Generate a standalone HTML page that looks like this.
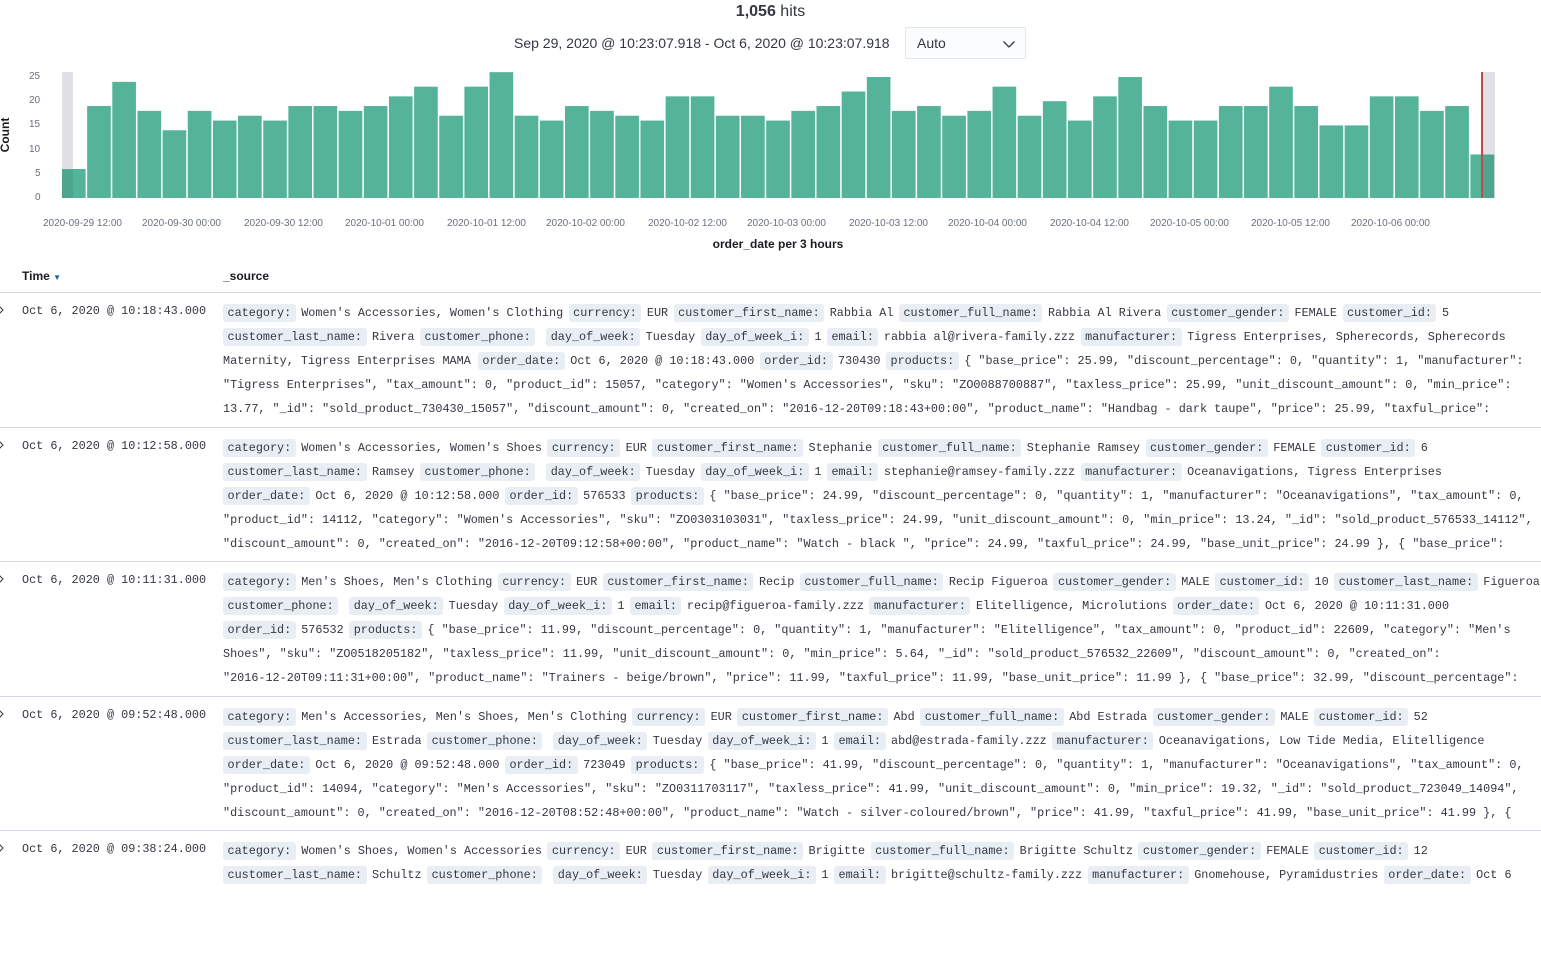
<!DOCTYPE html>
<html><head><meta charset="utf-8">
<style>
*{margin:0;padding:0;box-sizing:border-box}
body{width:1541px;height:876px;overflow:hidden;background:#fff;font-family:"Liberation Sans",sans-serif;color:#343741;position:relative}
.hits{position:absolute;top:2px;left:0;width:1541px;text-align:center;font-size:16px;line-height:20px;color:#343741}
.range{position:absolute;top:34px;left:514px;font-size:14px;line-height:18px;color:#343741}
.sel{position:absolute;left:905px;top:27px;width:121px;height:32px;background:#fbfcfd;border:1px solid #e3e7ee;border-radius:2px;font-size:14px;padding:7px 11px;line-height:16px}
.sel svg{position:absolute;right:9px;top:11px}
.ax{position:absolute;font-size:10px;color:#69707d;line-height:12px}
.xl{position:absolute;top:218px;font-size:10px;color:#69707d;white-space:nowrap}
.hdr{position:absolute;top:268px;font-size:12px;font-weight:bold;line-height:16px;color:#1a1c21}
.sep{position:absolute;left:0;width:1541px;height:1px;background:#d3dae6}
.row{position:absolute;left:0;width:1541px;height:134px;overflow:hidden;font-family:"Liberation Mono",monospace;font-size:11.8px;color:#343741}
.t{position:absolute;left:22px;top:10px;line-height:16px}
.chev{position:absolute;left:-3px;top:11px}
.src{position:absolute;left:223px;top:8px;width:1318px}
.l{height:24px;line-height:24px;white-space:nowrap;overflow:hidden}
.k{background:#e9eef4;border-radius:3px;padding:2px 4.5px;margin-right:5.5px}
.v{margin-right:5.5px}
</style></head><body>
<div class="hits"><b>1,056</b> hits</div>
<div class="range">Sep 29, 2020 @ 10:23:07.918 - Oct 6, 2020 @ 10:23:07.918</div>
<div class="sel">Auto<svg width="14" height="10" viewBox="0 0 14 10"><path d="M1.5 2.5L7 8L12.5 2.5" fill="none" stroke="#343741" stroke-width="1.3"/></svg></div>

<div class="ax" style="left:29px;top:71px">25</div>
<div class="ax" style="left:29px;top:95px">20</div>
<div class="ax" style="left:29px;top:119px">15</div>
<div class="ax" style="left:29px;top:144px">10</div>
<div class="ax" style="left:35px;top:168px">5</div>
<div class="ax" style="left:35px;top:192px">0</div>
<div style="position:absolute;left:-14px;top:129px;width:38px;text-align:center;line-height:12px;transform:rotate(-90deg);font-size:12px;font-weight:bold;color:#1a1c21">Count</div>

<svg style="position:absolute;left:0;top:0" width="1541" height="210">
<rect x="62" y="72" width="11" height="126" fill="#e0e1e6"/>
<rect x="1482" y="72" width="13" height="126" fill="#e0e1e6"/>
<g transform="translate(62,198) scale(25.15,-4.84)" fill="#54b399">
<rect x="0" width="0.94" height="6"/><rect x="1" width="0.94" height="19"/><rect x="2" width="0.94" height="24"/><rect x="3" width="0.94" height="18"/><rect x="4" width="0.94" height="14"/><rect x="5" width="0.94" height="18"/><rect x="6" width="0.94" height="16"/><rect x="7" width="0.94" height="17"/><rect x="8" width="0.94" height="16"/><rect x="9" width="0.94" height="19"/>
<rect x="10" width="0.94" height="19"/><rect x="11" width="0.94" height="18"/><rect x="12" width="0.94" height="19"/><rect x="13" width="0.94" height="21"/><rect x="14" width="0.94" height="23"/><rect x="15" width="0.94" height="17"/><rect x="16" width="0.94" height="23"/><rect x="17" width="0.94" height="26"/><rect x="18" width="0.94" height="17"/><rect x="19" width="0.94" height="16"/>
<rect x="20" width="0.94" height="19"/><rect x="21" width="0.94" height="18"/><rect x="22" width="0.94" height="17"/><rect x="23" width="0.94" height="16"/><rect x="24" width="0.94" height="21"/><rect x="25" width="0.94" height="21"/><rect x="26" width="0.94" height="17"/><rect x="27" width="0.94" height="17"/><rect x="28" width="0.94" height="16"/><rect x="29" width="0.94" height="18"/>
<rect x="30" width="0.94" height="19"/><rect x="31" width="0.94" height="22"/><rect x="32" width="0.94" height="25"/><rect x="33" width="0.94" height="18"/><rect x="34" width="0.94" height="19"/><rect x="35" width="0.94" height="17"/><rect x="36" width="0.94" height="18"/><rect x="37" width="0.94" height="23"/><rect x="38" width="0.94" height="17"/><rect x="39" width="0.94" height="20"/>
<rect x="40" width="0.94" height="16"/><rect x="41" width="0.94" height="21"/><rect x="42" width="0.94" height="25"/><rect x="43" width="0.94" height="19"/><rect x="44" width="0.94" height="16"/><rect x="45" width="0.94" height="16"/><rect x="46" width="0.94" height="19"/><rect x="47" width="0.94" height="19"/><rect x="48" width="0.94" height="23"/><rect x="49" width="0.94" height="19"/>
<rect x="50" width="0.94" height="15"/><rect x="51" width="0.94" height="15"/><rect x="52" width="0.94" height="21"/><rect x="53" width="0.94" height="21"/><rect x="54" width="0.94" height="18"/><rect x="55" width="0.94" height="19"/><rect x="56" width="0.94" height="9"/>
</g>
<rect x="62" y="170" width="11" height="28" fill="#000" opacity="0.08"/>
<rect x="1482" y="155" width="13" height="43" fill="#000" opacity="0.08"/>
<rect x="1481" y="72" width="2" height="126" fill="#bd4c48"/>
</svg>

<div class="xl" style="left:43px">2020-09-29 12:00</div>
<div class="xl" style="left:142px">2020-09-30 00:00</div>
<div class="xl" style="left:244px">2020-09-30 12:00</div>
<div class="xl" style="left:345px">2020-10-01 00:00</div>
<div class="xl" style="left:447px">2020-10-01 12:00</div>
<div class="xl" style="left:546px">2020-10-02 00:00</div>
<div class="xl" style="left:648px">2020-10-02 12:00</div>
<div class="xl" style="left:747px">2020-10-03 00:00</div>
<div class="xl" style="left:849px">2020-10-03 12:00</div>
<div class="xl" style="left:948px">2020-10-04 00:00</div>
<div class="xl" style="left:1050px">2020-10-04 12:00</div>
<div class="xl" style="left:1150px">2020-10-05 00:00</div>
<div class="xl" style="left:1251px">2020-10-05 12:00</div>
<div class="xl" style="left:1351px">2020-10-06 00:00</div>
<div style="position:absolute;top:237px;left:0;width:1556px;text-align:center;font-size:12px;font-weight:bold;color:#1a1c21">order_date per 3 hours</div>

<div class="hdr" style="left:22px">Time <span style="color:#006bb4;font-size:8px">&#9660;</span></div>
<div class="hdr" style="left:223px">_source</div>

<div class="sep" style="top:292px"></div>
<div class="row" style="top:293px">
<svg class="chev" width="8" height="12"><path d="M2 2L6 6L2 10" fill="none" stroke="#343741" stroke-width="1"/></svg>
<div class="t">Oct 6, 2020 @ 10:18:43.000</div>
<div class="src">
<div class="l"><span class="k">category:</span><span class="v">Women's Accessories, Women's Clothing</span><span class="k">currency:</span><span class="v">EUR</span><span class="k">customer_first_name:</span><span class="v">Rabbia Al</span><span class="k">customer_full_name:</span><span class="v">Rabbia Al Rivera</span><span class="k">customer_gender:</span><span class="v">FEMALE</span><span class="k">customer_id:</span><span class="v">5</span></div>
<div class="l"><span class="k">customer_last_name:</span><span class="v">Rivera</span><span class="k">customer_phone:</span><span class="v"></span><span class="k">day_of_week:</span><span class="v">Tuesday</span><span class="k">day_of_week_i:</span><span class="v">1</span><span class="k">email:</span><span class="v">rabbia al@rivera-family.zzz</span><span class="k">manufacturer:</span><span class="v">Tigress Enterprises, Spherecords, Spherecords</span></div>
<div class="l">Maternity, Tigress Enterprises MAMA <span class="k">order_date:</span><span class="v">Oct 6, 2020 @ 10:18:43.000</span><span class="k">order_id:</span><span class="v">730430</span><span class="k">products:</span><span class="v">{ "base_price": 25.99, "discount_percentage": 0, "quantity": 1, "manufacturer":</span></div>
<div class="l">"Tigress Enterprises", "tax_amount": 0, "product_id": 15057, "category": "Women's Accessories", "sku": "ZO0088700887", "taxless_price": 25.99, "unit_discount_amount": 0, "min_price":</div>
<div class="l">13.77, "_id": "sold_product_730430_15057", "discount_amount": 0, "created_on": "2016-12-20T09:18:43+00:00", "product_name": "Handbag - dark taupe", "price": 25.99, "taxful_price":</div>
</div></div>

<div class="sep" style="top:427px"></div>
<div class="row" style="top:428px">
<svg class="chev" width="8" height="12"><path d="M2 2L6 6L2 10" fill="none" stroke="#343741" stroke-width="1"/></svg>
<div class="t">Oct 6, 2020 @ 10:12:58.000</div>
<div class="src">
<div class="l"><span class="k">category:</span><span class="v">Women's Accessories, Women's Shoes</span><span class="k">currency:</span><span class="v">EUR</span><span class="k">customer_first_name:</span><span class="v">Stephanie</span><span class="k">customer_full_name:</span><span class="v">Stephanie Ramsey</span><span class="k">customer_gender:</span><span class="v">FEMALE</span><span class="k">customer_id:</span><span class="v">6</span></div>
<div class="l"><span class="k">customer_last_name:</span><span class="v">Ramsey</span><span class="k">customer_phone:</span><span class="v"></span><span class="k">day_of_week:</span><span class="v">Tuesday</span><span class="k">day_of_week_i:</span><span class="v">1</span><span class="k">email:</span><span class="v">stephanie@ramsey-family.zzz</span><span class="k">manufacturer:</span><span class="v">Oceanavigations, Tigress Enterprises</span></div>
<div class="l"><span class="k">order_date:</span><span class="v">Oct 6, 2020 @ 10:12:58.000</span><span class="k">order_id:</span><span class="v">576533</span><span class="k">products:</span><span class="v">{ "base_price": 24.99, "discount_percentage": 0, "quantity": 1, "manufacturer": "Oceanavigations", "tax_amount": 0,</span></div>
<div class="l">"product_id": 14112, "category": "Women's Accessories", "sku": "ZO0303103031", "taxless_price": 24.99, "unit_discount_amount": 0, "min_price": 13.24, "_id": "sold_product_576533_14112",</div>
<div class="l">"discount_amount": 0, "created_on": "2016-12-20T09:12:58+00:00", "product_name": "Watch - black ", "price": 24.99, "taxful_price": 24.99, "base_unit_price": 24.99 }, { "base_price":</div>
</div></div>

<div class="sep" style="top:561px"></div>
<div class="row" style="top:562px">
<svg class="chev" width="8" height="12"><path d="M2 2L6 6L2 10" fill="none" stroke="#343741" stroke-width="1"/></svg>
<div class="t">Oct 6, 2020 @ 10:11:31.000</div>
<div class="src">
<div class="l"><span class="k">category:</span><span class="v">Men's Shoes, Men's Clothing</span><span class="k">currency:</span><span class="v">EUR</span><span class="k">customer_first_name:</span><span class="v">Recip</span><span class="k">customer_full_name:</span><span class="v">Recip Figueroa</span><span class="k">customer_gender:</span><span class="v">MALE</span><span class="k">customer_id:</span><span class="v">10</span><span class="k">customer_last_name:</span><span class="v">Figueroa</span></div>
<div class="l"><span class="k">customer_phone:</span><span class="v"></span><span class="k">day_of_week:</span><span class="v">Tuesday</span><span class="k">day_of_week_i:</span><span class="v">1</span><span class="k">email:</span><span class="v">recip@figueroa-family.zzz</span><span class="k">manufacturer:</span><span class="v">Elitelligence, Microlutions</span><span class="k">order_date:</span><span class="v">Oct 6, 2020 @ 10:11:31.000</span></div>
<div class="l"><span class="k">order_id:</span><span class="v">576532</span><span class="k">products:</span><span class="v">{ "base_price": 11.99, "discount_percentage": 0, "quantity": 1, "manufacturer": "Elitelligence", "tax_amount": 0, "product_id": 22609, "category": "Men's</span></div>
<div class="l">Shoes", "sku": "ZO0518205182", "taxless_price": 11.99, "unit_discount_amount": 0, "min_price": 5.64, "_id": "sold_product_576532_22609", "discount_amount": 0, "created_on":</div>
<div class="l">"2016-12-20T09:11:31+00:00", "product_name": "Trainers - beige/brown", "price": 11.99, "taxful_price": 11.99, "base_unit_price": 11.99 }, { "base_price": 32.99, "discount_percentage":</div>
</div></div>

<div class="sep" style="top:696px"></div>
<div class="row" style="top:697px">
<svg class="chev" width="8" height="12"><path d="M2 2L6 6L2 10" fill="none" stroke="#343741" stroke-width="1"/></svg>
<div class="t">Oct 6, 2020 @ 09:52:48.000</div>
<div class="src">
<div class="l"><span class="k">category:</span><span class="v">Men's Accessories, Men's Shoes, Men's Clothing</span><span class="k">currency:</span><span class="v">EUR</span><span class="k">customer_first_name:</span><span class="v">Abd</span><span class="k">customer_full_name:</span><span class="v">Abd Estrada</span><span class="k">customer_gender:</span><span class="v">MALE</span><span class="k">customer_id:</span><span class="v">52</span></div>
<div class="l"><span class="k">customer_last_name:</span><span class="v">Estrada</span><span class="k">customer_phone:</span><span class="v"></span><span class="k">day_of_week:</span><span class="v">Tuesday</span><span class="k">day_of_week_i:</span><span class="v">1</span><span class="k">email:</span><span class="v">abd@estrada-family.zzz</span><span class="k">manufacturer:</span><span class="v">Oceanavigations, Low Tide Media, Elitelligence</span></div>
<div class="l"><span class="k">order_date:</span><span class="v">Oct 6, 2020 @ 09:52:48.000</span><span class="k">order_id:</span><span class="v">723049</span><span class="k">products:</span><span class="v">{ "base_price": 41.99, "discount_percentage": 0, "quantity": 1, "manufacturer": "Oceanavigations", "tax_amount": 0,</span></div>
<div class="l">"product_id": 14094, "category": "Men's Accessories", "sku": "ZO0311703117", "taxless_price": 41.99, "unit_discount_amount": 0, "min_price": 19.32, "_id": "sold_product_723049_14094",</div>
<div class="l">"discount_amount": 0, "created_on": "2016-12-20T08:52:48+00:00", "product_name": "Watch - silver-coloured/brown", "price": 41.99, "taxful_price": 41.99, "base_unit_price": 41.99 }, {</div>
</div></div>

<div class="sep" style="top:830px"></div>
<div class="row" style="top:831px">
<svg class="chev" width="8" height="12"><path d="M2 2L6 6L2 10" fill="none" stroke="#343741" stroke-width="1"/></svg>
<div class="t">Oct 6, 2020 @ 09:38:24.000</div>
<div class="src">
<div class="l"><span class="k">category:</span><span class="v">Women's Shoes, Women's Accessories</span><span class="k">currency:</span><span class="v">EUR</span><span class="k">customer_first_name:</span><span class="v">Brigitte</span><span class="k">customer_full_name:</span><span class="v">Brigitte Schultz</span><span class="k">customer_gender:</span><span class="v">FEMALE</span><span class="k">customer_id:</span><span class="v">12</span></div>
<div class="l"><span class="k">customer_last_name:</span><span class="v">Schultz</span><span class="k">customer_phone:</span><span class="v"></span><span class="k">day_of_week:</span><span class="v">Tuesday</span><span class="k">day_of_week_i:</span><span class="v">1</span><span class="k">email:</span><span class="v">brigitte@schultz-family.zzz</span><span class="k">manufacturer:</span><span class="v">Gnomehouse, Pyramidustries</span><span class="k">order_date:</span><span class="v">Oct 6</span></div>
</div></div>
</body></html>
